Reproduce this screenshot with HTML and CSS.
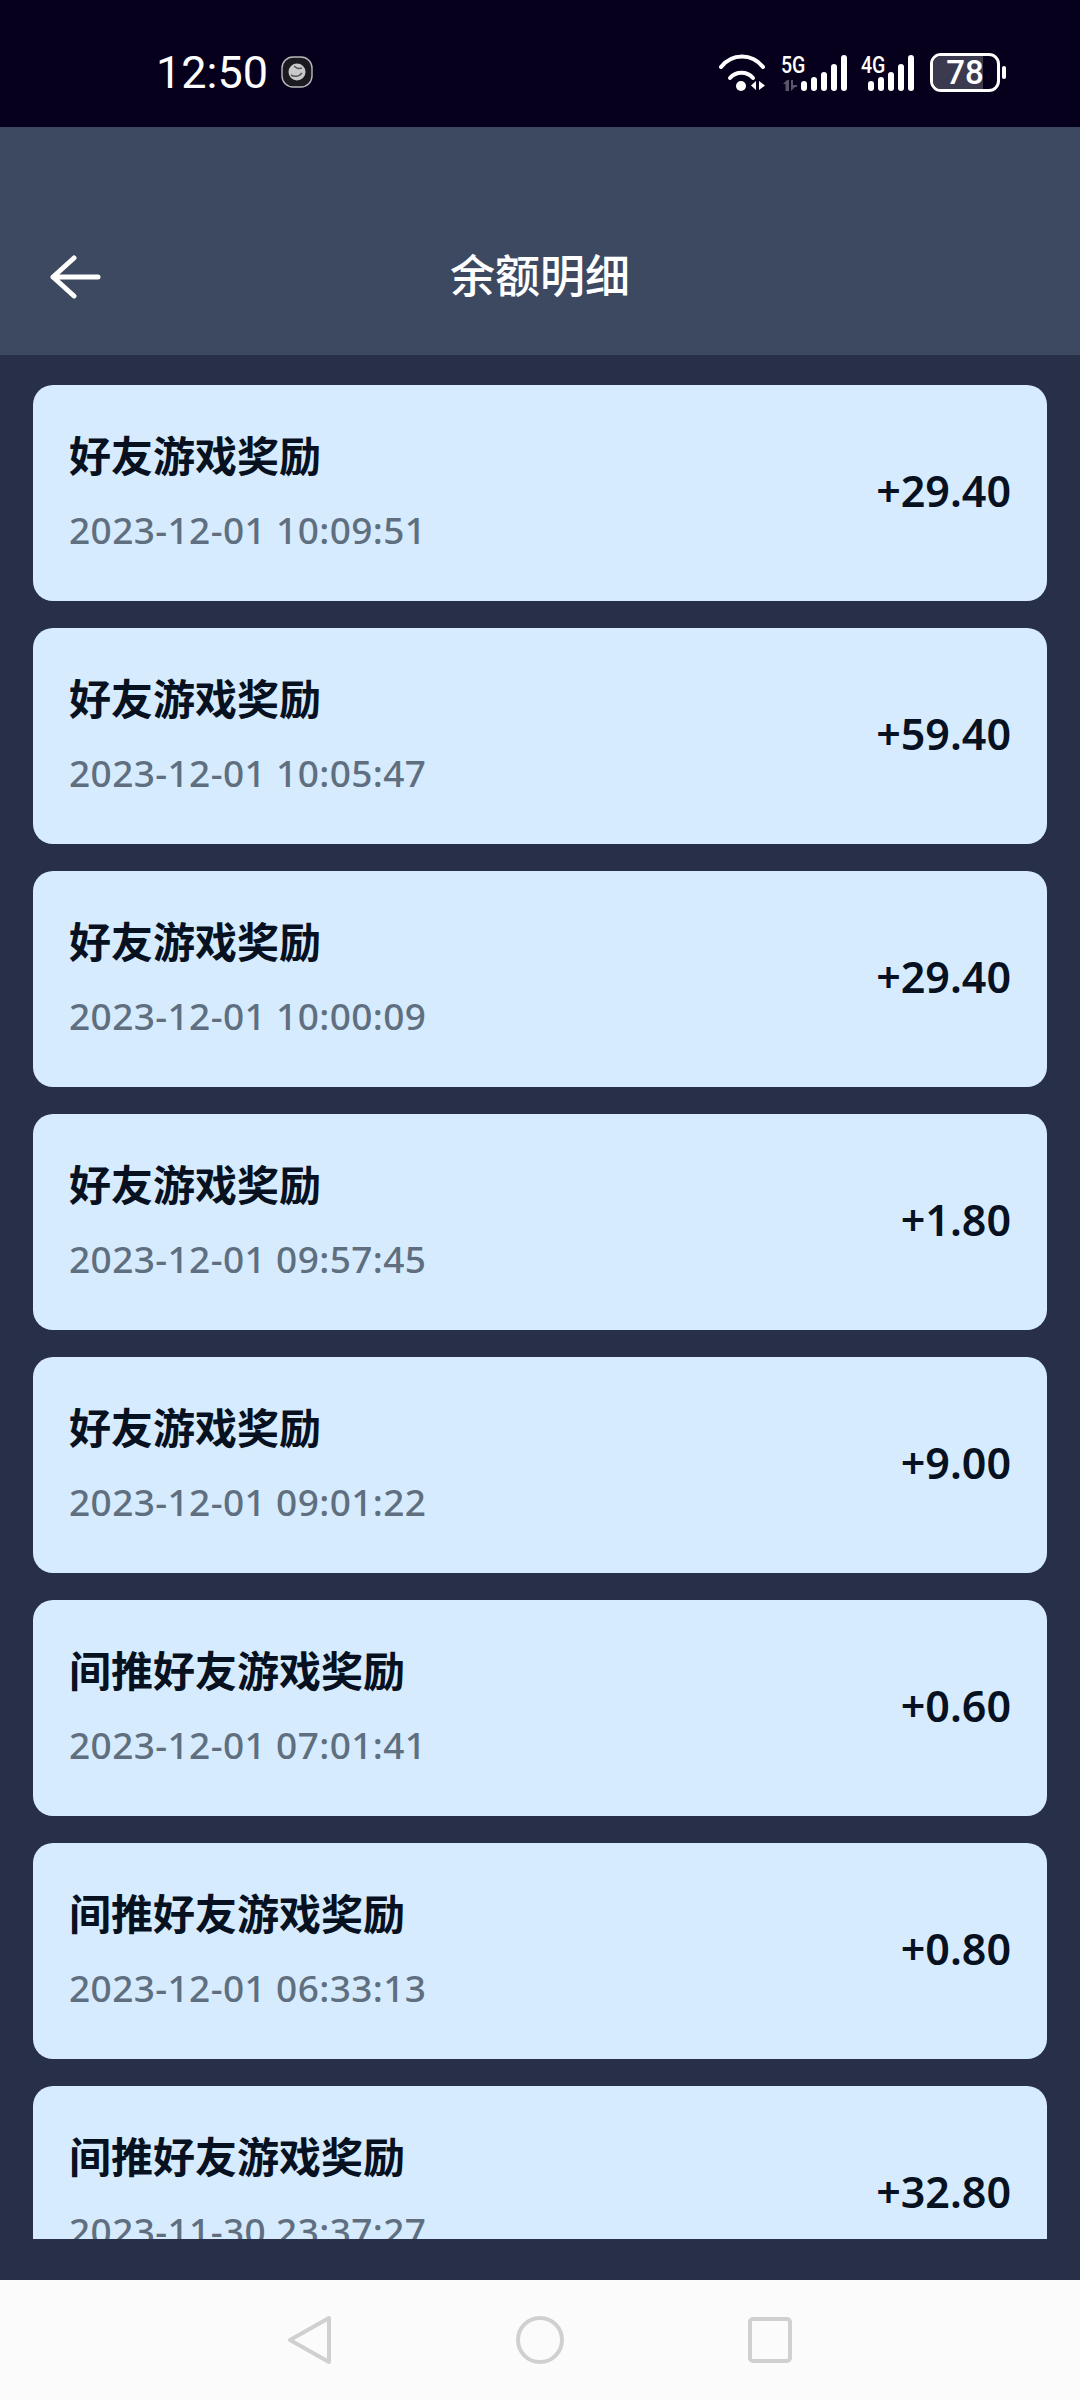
FILE: index.html
```html
<!DOCTYPE html>
<html lang="zh-CN">
<head>
    <meta charset="UTF-8">
    <meta name="viewport" content="width=device-width, initial-scale=1.0">
    <title>余额明细</title>
    <link rel="stylesheet" href="styles.css">
</head>
<body>
    <div class="status-bar">
        <div class="status-left">
            <span class="clock">12:50</span>
            <svg class="app-dot" width="32" height="32" viewBox="0 0 32 32">
                <rect x="1" y="1" width="30" height="30" rx="11" fill="#1b1a20" stroke="#b8b8bc" stroke-width="1.4"/>
                <circle cx="16" cy="16" r="8.5" fill="#c9c9cb"/>
                <path d="M10 19c3 2 8 2 11-2M13 10c2 2 5 3 8 2" fill="none" stroke="#55555a" stroke-width="1.6"/>
            </svg>
        </div>
        <div class="status-right">
            <svg class="wifi" width="48" height="38" viewBox="0 0 48 38">
                <g fill="none" stroke="#fff" stroke-width="4" stroke-linecap="round">
                    <path d="M3 14C14 0 34 0 45 14"/>
                    <path d="M12 25C18 18 29 18 35 25"/>
                </g>
                <circle cx="23" cy="33" r="5" fill="#fff"/>
                <path d="M38 28v9l-5-4.500zM41 28v9l6-4.500z" fill="#fff"/>
            </svg>
            <div class="signal signal-5g">
                <span class="net-label">5G</span>
                <svg class="net-arrows" width="15" height="11" viewBox="0 0 15 11">
                    <path d="M4 0L0 4H2.500V11H6V0ZM8 0V11L12 7H14V5H10V0Z" fill="#5a5668"/>
                </svg>
                <div class="bars">
                    <i class="b1"></i><i class="b2"></i><i class="b3"></i><i class="b4"></i><i class="b5"></i>
                </div>
            </div>
            <div class="signal signal-4g">
                <span class="net-label">4G</span>
                <div class="bars">
                    <i class="b1"></i><i class="b2"></i><i class="b3"></i><i class="b4"></i><i class="b5"></i>
                </div>
            </div>
            <div class="battery">
                <div class="battery-body">
                    <div class="battery-fill"></div>
                    <span class="battery-num">78</span>
                </div>
                <div class="battery-cap"></div>
            </div>
        </div>
    </div>

    <header class="top-nav">
        <svg class="back" width="52" height="44" viewBox="0 0 52 44">
            <path d="M25 3L4 22L25 41M4 22H49" fill="none" stroke="#fff" stroke-width="5" stroke-linecap="round" stroke-linejoin="round"/>
        </svg>
        <h1>余额明细</h1>
    </header>

    <main class="content">
        <div class="list">
            <div class="item">
                <div class="item-text"><div class="item-title">好友游戏奖励</div><div class="item-date">2023-12-01 10:09:51</div></div>
                <div class="item-amount">+29.40</div>
            </div>
            <div class="item">
                <div class="item-text"><div class="item-title">好友游戏奖励</div><div class="item-date">2023-12-01 10:05:47</div></div>
                <div class="item-amount">+59.40</div>
            </div>
            <div class="item">
                <div class="item-text"><div class="item-title">好友游戏奖励</div><div class="item-date">2023-12-01 10:00:09</div></div>
                <div class="item-amount">+29.40</div>
            </div>
            <div class="item">
                <div class="item-text"><div class="item-title">好友游戏奖励</div><div class="item-date">2023-12-01 09:57:45</div></div>
                <div class="item-amount">+1.80</div>
            </div>
            <div class="item">
                <div class="item-text"><div class="item-title">好友游戏奖励</div><div class="item-date">2023-12-01 09:01:22</div></div>
                <div class="item-amount">+9.00</div>
            </div>
            <div class="item">
                <div class="item-text"><div class="item-title">间推好友游戏奖励</div><div class="item-date">2023-12-01 07:01:41</div></div>
                <div class="item-amount">+0.60</div>
            </div>
            <div class="item">
                <div class="item-text"><div class="item-title">间推好友游戏奖励</div><div class="item-date">2023-12-01 06:33:13</div></div>
                <div class="item-amount">+0.80</div>
            </div>
            <div class="item">
                <div class="item-text"><div class="item-title">间推好友游戏奖励</div><div class="item-date">2023-11-30 23:37:27</div></div>
                <div class="item-amount">+32.80</div>
            </div>
        </div>
    </main>

    <div class="nav-bar">
        <svg width="46" height="50" viewBox="0 0 46 50">
            <path d="M43 3V47L4 25Z" fill="none" stroke="#d0d0d0" stroke-width="4" stroke-linejoin="round"/>
        </svg>
        <svg width="48" height="48" viewBox="0 0 48 48">
            <circle cx="24" cy="24" r="22" fill="none" stroke="#d0d0d0" stroke-width="4"/>
        </svg>
        <svg width="44" height="46" viewBox="0 0 44 46">
            <rect x="2" y="2" width="40" height="42" rx="3" fill="none" stroke="#d0d0d0" stroke-width="4"/>
        </svg>
    </div>
</body>
</html>
```

FILE: styles.css
```css
* {
    box-sizing: border-box;
}
body {
    margin: 0;
    width: 1080px;
    height: 2400px;
    display: flex;
    flex-direction: column;
    overflow: hidden;
    font-family: "Noto Sans", "Noto Sans CJK SC", sans-serif;
    background-color: #283047;
}

/* Status bar */
.status-bar {
    height: 127px;
    flex: none;
    background-color: #06001c;
    color: #fff;
    display: flex;
    align-items: center;
    justify-content: space-between;
    padding: 17px 74px 0 156px;
}
.status-left {
    display: flex;
    align-items: center;
    gap: 13px;
}
.clock {
    font-family: Roboto, sans-serif;
    font-size: 45px;
    line-height: 1;
}
.status-right {
    display: flex;
    align-items: center;
    gap: 14px;
}
.wifi {
    margin-right: 1px;
}
.signal {
    position: relative;
    height: 38px;
}
.signal-5g {
    width: 66px;
}
.signal-4g {
    width: 53px;
}
.net-label {
    position: absolute;
    left: 0;
    top: 1px;
    font-family: Roboto, sans-serif;
    font-size: 23px;
    font-weight: 500;
    line-height: 1;
    transform: scaleX(0.85);
    transform-origin: left;
}
.net-arrows {
    position: absolute;
    left: 2px;
    bottom: 0;
}
.bars {
    position: absolute;
    right: 0;
    bottom: 0;
    display: flex;
    align-items: flex-end;
    gap: 3.500px;
}
.bars i {
    display: block;
    width: 6.500px;
    border-radius: 3px;
    background-color: #fff;
}
.bars .b1 { height: 10px; }
.bars .b2 { height: 14px; }
.bars .b3 { height: 19px; }
.bars .b4 { height: 27px; }
.bars .b5 { height: 36px; }
.battery {
    display: flex;
    align-items: center;
    gap: 2px;
    margin-left: 2px;
}
.battery-body {
    position: relative;
    width: 70px;
    height: 39px;
    border: 3px solid #fff;
    border-radius: 11px;
    overflow: hidden;
    text-align: center;
}
.battery-fill {
    position: absolute;
    left: 0;
    top: 0;
    bottom: 0;
    width: 78%;
    background-color: #3c3a4e;
}
.battery-num {
    position: relative;
    font-family: Roboto, sans-serif;
    font-size: 33px;
    font-weight: 500;
    line-height: 33px;
    display: block;
}
.battery-cap {
    width: 4px;
    height: 13px;
    border-radius: 2px;
    background-color: #fff;
}

/* Title bar */
.top-nav {
    height: 228px;
    flex: none;
    position: relative;
    background-color: #3c4961;
    display: flex;
    align-items: center;
    justify-content: center;
    padding-top: 64px;
}
.top-nav h1 {
    margin: 0;
    color: #fff;
    font-family: "Noto Sans CJK SC", sans-serif;
    font-size: 45px;
    font-weight: 500;
    line-height: 1;
}
.back {
    position: absolute;
    left: 49px;
    top: 128px;
}

/* Records */
.content {
    flex: 1;
    min-height: 0;
    padding-bottom: 41px;
}
.list {
    height: 100%;
    overflow: hidden;
    padding: 30px 33px 0;
}
.item {
    height: 216px;
    margin-bottom: 27px;
    padding: 0 36px;
    border-radius: 20px;
    background-color: #d6ebfd;
    display: flex;
    align-items: center;
    justify-content: space-between;
}
.item-text {
    padding-bottom: 8px;
}
.item-title {
    color: #07111f;
    font-family: "Noto Sans CJK SC", sans-serif;
    font-size: 42px;
    font-weight: 700;
    line-height: 56px;
}
.item-date {
    margin-top: 26px;
    color: #5f6f80;
    font-size: 37px;
    font-weight: 500;
    letter-spacing: 0.4px;
    line-height: 44px;
}
.item-amount {
    padding-bottom: 6px;
    color: #07111f;
    font-size: 43px;
    font-weight: 600;
}

/* System navigation */
.nav-bar {
    height: 120px;
    flex: none;
    background-color: #fbfbfb;
    display: flex;
    align-items: center;
    justify-content: center;
    gap: 184px;
    padding-right: 3px;
}
```
